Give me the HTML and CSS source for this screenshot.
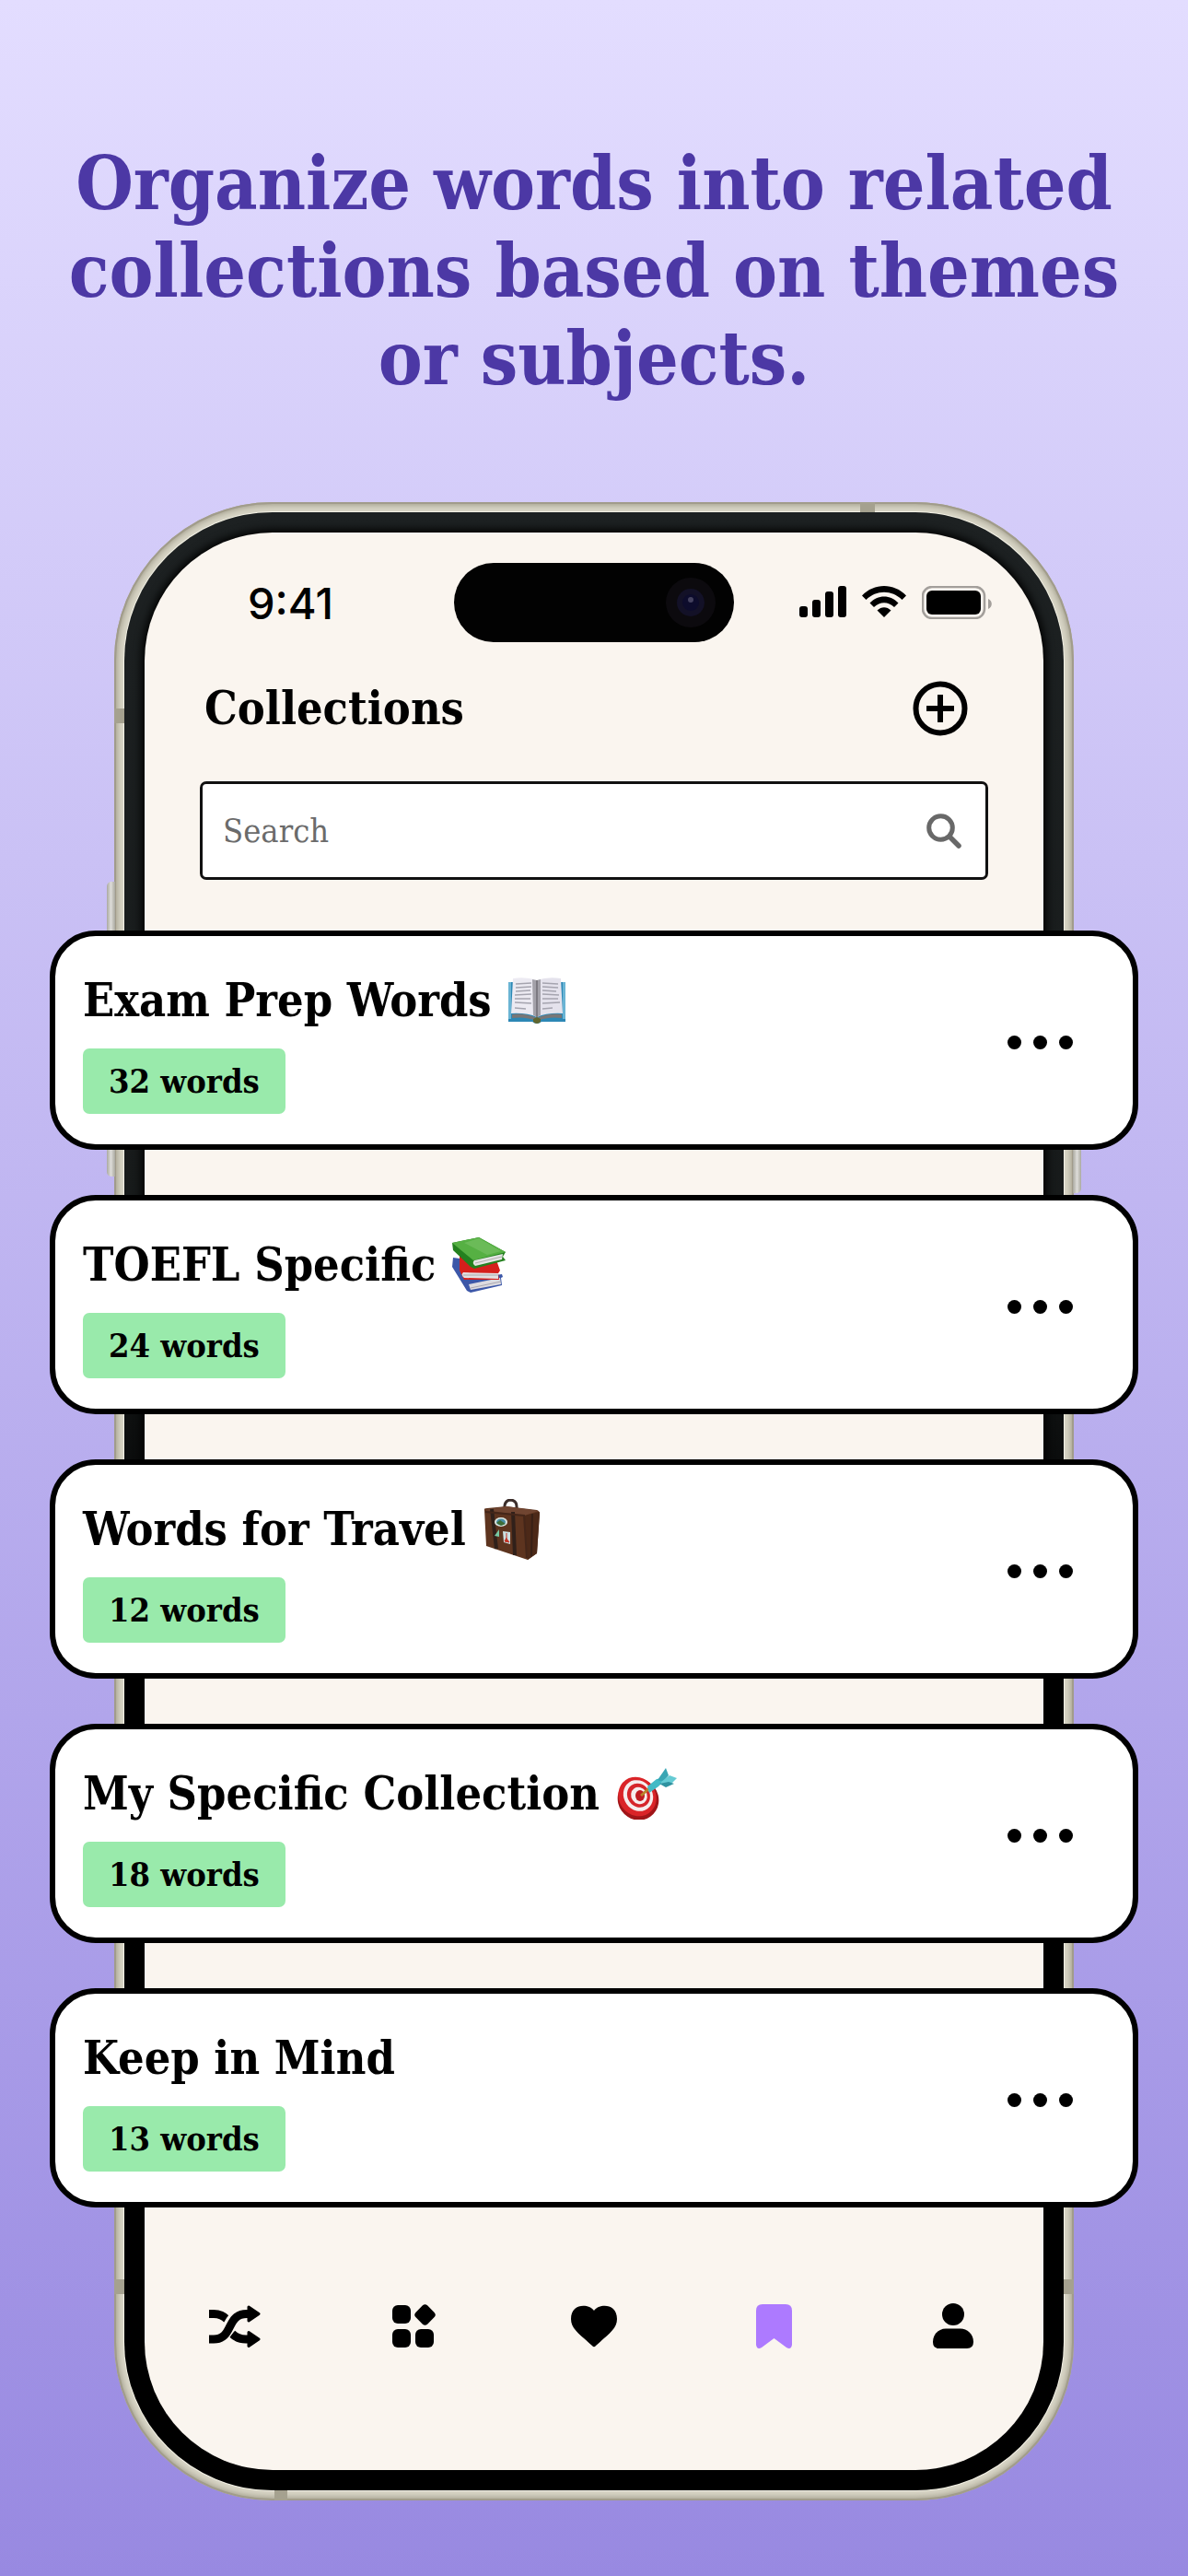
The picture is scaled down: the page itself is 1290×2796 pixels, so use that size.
FILE: index.html
```html
<!DOCTYPE html>
<html lang="en">

<head>
    <meta charset="UTF-8" />
    <meta name="viewport" content="width=device-width, initial-scale=1.0" />
    <title>Collections</title>
    <link rel="stylesheet" href="styles.css">
</head>

<body>
    <h1 class="headline">Organize words into related<br>collections based on themes<br>or subjects.</h1>

    <main class="phone">
        <!-- side buttons and antenna bands -->
        <span class="side-button volume-up"></span>
        <span class="side-button volume-down"></span>
        <span class="side-button power"></span>
        <span class="band band-top"></span>
        <span class="band band-left"></span>
        <span class="band band-left-low"></span>
        <span class="band band-right-low"></span>
        <span class="band band-bottom"></span>

        <div class="bezel">
            <div class="screen">
                <div class="status-bar">
                    <span class="time">9:41</span>
                    <div class="island">
                        <svg width="54" height="54" viewBox="0 0 54 54">
                            <circle cx="27" cy="27" r="27" fill="#0c0a0e" />
                            <circle cx="27" cy="27" r="15" fill="#131127" />
                            <circle cx="27" cy="27" r="9" fill="#0d0c2c" />
                            <circle cx="27" cy="24" r="3" fill="#45425f" />
                        </svg>
                    </div>
                    <div class="status-icons">
                        <svg width="51" height="34" viewBox="0 0 51 34">
                            <rect x="0" y="22" width="9" height="12" rx="3" />
                            <rect x="14" y="15" width="9" height="19" rx="3" />
                            <rect x="28" y="6" width="9" height="28" rx="3" />
                            <rect x="42" y="0" width="9" height="34" rx="3" />
                        </svg>
                        <svg width="48" height="34" viewBox="0 0 48 34">
                            <path d="M0 10.500C13-3.500 35-3.500 48 10.500L43.500 15C32.500 4 15.500 4 4.500 15Z" />
                            <path d="M8.500 18.500C17 9 31 9 39.500 18.500L35 23C28.500 16.500 19.500 16.500 13 23Z" />
                            <path d="M16.500 26.500C21 22 27 22 31.500 26.500L24 34Z" />
                        </svg>
                        <svg width="76" height="36" viewBox="0 0 76 36">
                            <rect x="1" y="1" width="67" height="34" rx="10" fill="none" stroke="#a39f9b" stroke-width="2.500" />
                            <rect x="5" y="5" width="59" height="26" rx="6" />
                            <path d="M72 14C77 16 77 23 72 25Z" fill="#a39f9b" />
                        </svg>
                    </div>
                </div>

                <header class="top">
                    <h2 class="page-title">Collections</h2>
                    <button class="add" aria-label="Add collection">
                        <svg width="60" height="60" viewBox="0 0 60 60" fill="none" stroke="#000" stroke-width="6">
                            <circle cx="30" cy="30" r="26.500" />
                            <path d="M30 15V45M15 30H45" />
                        </svg>
                    </button>
                </header>

                <div class="search">
                    <input type="search" id="search" placeholder="Search">
                    <label for="search" aria-label="Search">
                        <svg width="38" height="38" viewBox="0 0 38 38" fill="none" stroke="#686868" stroke-width="5">
                            <circle cx="15.500" cy="15.500" r="12.800" />
                            <path d="M25 25L35 35" stroke-linecap="round" stroke-width="5.500" />
                        </svg>
                    </label>
                </div>

                <ul class="collections">
                    <li class="card">
                        <div>
                            <h3 class="card-title">Exam Prep Words
                                <svg width="62" height="50" viewBox="0 0 62 50">
                                    <path d="M0 5H62V48H36Q31 52 26 48H0Z" fill="#2c87b5" />
                                    <path d="M0 5H3V45H0ZM59 5H62V45H59Z" fill="#6ab4d4" />
                                    <path d="M4 40Q18 38 31 44Q44 38 58 40V44Q44 42 31 47Q18 42 4 44Z" fill="#787677" />
                                    <path d="M5 1Q20-1 31 3V43Q20 38 3 39Z" fill="#eceaf2" />
                                    <path d="M57 1Q42-1 31 3V43Q42 38 59 39Z" fill="#e4e2ec" />
                                    <path d="M26 2L31 3L35 2V41L31 43L27 41Z" fill="#a3a1a9" />
                                    <path d="M31 3V43" stroke="#6f6d74" stroke-width="1.500" />
                                    <path d="M8 7L25 6M8 11L25 10M8 15L24 14M7 19L25 18M7 23L24 23M7 27L25 28M7 33L19 34M37 6L54 7M37 10L54 11M37 14L52 15M37 18L55 19M37 23L54 23M37 28L56 27M37 34L48 33" stroke="#a5a4af" stroke-width="1.300" />
                                    <path d="M27 45L31 43L35 45V48Q31 52 27 48Z" fill="#60662f" />
                                </svg>
                            </h3>
                            <span class="count">32 words</span>
                        </div>
                        <button class="more" aria-label="More options"><i></i><i></i><i></i></button>
                    </li>

                    <li class="card">
                        <div>
                            <h3 class="card-title">TOEFL Specific
                                <svg width="58" height="60" viewBox="0 0 58 60">
                                    <path d="M1 22L8 23L20 45L54 40L55 43L53 44L54 52L20 60L16 58L0 32Z" fill="#3c57a8" />
                                    <path d="M18 51L52 44L53 51L20 57Z" fill="#dcdbe0" />
                                    <path d="M20 55L53 48" stroke="#a9a8b0" />
                                    <path d="M8 20L47 22L52 36L50 39L51 46L13 46L8 36Z" fill="#d51f1c" />
                                    <path d="M12 38L50 39V45L13 44Q9 41 12 38Z" fill="#e2e0e2" />
                                    <path d="M12 41H50" stroke="#aaa7aa" />
                                    <path d="M0 6L29 0L58 16L55 21L58 25L24 34L20 32L1 14Z" fill="#24801f" />
                                    <path d="M0 6L29 0L58 16L23 25Z" fill="#56b043" />
                                    <path d="M13 6L29 1L53 15L38 19Z" fill="#79c367" opacity=".6" />
                                    <path d="M24 25L55 18L54 24L25 31Q21 28 24 25Z" fill="#e4e4e3" />
                                    <path d="M25 28L54 21" stroke="#aeb0ac" />
                                </svg>
                            </h3>
                            <span class="count">24 words</span>
                        </div>
                        <button class="more" aria-label="More options"><i></i><i></i><i></i></button>
                    </li>

                    <li class="card">
                        <div>
                            <h3 class="card-title">Words for Travel
                                <svg width="62" height="66" viewBox="0 0 62 66">
                                    <path d="M24 13V7Q25 1 31 1Q37 2 37 8V13" fill="none" stroke="#3b2d2a" stroke-width="3" />
                                    <path d="M2 12Q1 10 5 10L26 8L59 12Q62 13 62 16L59 59L49 66L4 51Z" fill="#5d341f" />
                                    <path d="M45 18L62 14L59 59L49 66Z" fill="#4c2918" />
                                    <path d="M2 12L26 8L61 13L45 18Z" fill="#704531" />
                                    <path d="M10 11L15 54M33 14L35 61" stroke="#30201a" stroke-width="4" />
                                    <path d="M54 16L53 62" stroke="#382016" stroke-width="2" />
                                    <path d="M3 14L45 18L48 64" fill="none" stroke="#442619" stroke-width="2" />
                                    <ellipse cx="20" cy="25" rx="7" ry="5" fill="#dbe5e0" />
                                    <ellipse cx="20" cy="25" rx="5" ry="3.500" fill="#478da5" />
                                    <path d="M15 26L19 23L25 27L20 29Z" fill="#3e6d38" />
                                    <path d="M13 40L18 33V41Z" fill="#77c9a4" />
                                    <path d="M22 35L30 36V49L23 47Z" fill="#cbdfe1" />
                                    <path d="M26 37V43L29 47L24 46L26 42" fill="#c33023" stroke="#c33023" />
                                </svg>
                            </h3>
                            <span class="count">12 words</span>
                        </div>
                        <button class="more" aria-label="More options"><i></i><i></i><i></i></button>
                    </li>

                    <li class="card">
                        <div>
                            <h3 class="card-title">My Specific Collection
                                <svg width="66" height="56" viewBox="0 0 66 56">
                                    <ellipse cx="24" cy="34" rx="22" ry="23" transform="rotate(-35 24 34)" fill="#a01518" />
                                    <ellipse cx="23" cy="31" rx="20" ry="22" transform="rotate(-35 23 31)" fill="#da2428" />
                                    <ellipse cx="24" cy="30" rx="15.500" ry="17.500" transform="rotate(-35 24 30)" fill="#f6eded" />
                                    <ellipse cx="24.500" cy="30" rx="12" ry="13.500" transform="rotate(-35 24 30)" fill="#d6252a" />
                                    <ellipse cx="25" cy="30" rx="8.500" ry="9.500" transform="rotate(-35 25 30)" fill="#f6eded" />
                                    <ellipse cx="26" cy="30" rx="5" ry="6" fill="#bf1c22" />
                                    <path d="M27 30L36 22" stroke="#b98329" stroke-width="3" />
                                    <path d="M34 20L44 12L51 11L52 14L46 20L36 27Z" fill="#43bac6" />
                                    <path d="M45 13L54 0L57 8L51 15Z" fill="#38a6b4" />
                                    <path d="M49 15L58 8L66 11L61 16L50 17Z" fill="#65cbd4" />
                                    <path d="M47 17L57 15L63 17L54 21Z" fill="#2f92a0" />
                                </svg>
                            </h3>
                            <span class="count">18 words</span>
                        </div>
                        <button class="more" aria-label="More options"><i></i><i></i><i></i></button>
                    </li>

                    <li class="card">
                        <div>
                            <h3 class="card-title">Keep in Mind</h3>
                            <span class="count">13 words</span>
                        </div>
                        <button class="more" aria-label="More options"><i></i><i></i><i></i></button>
                    </li>
                </ul>

                <nav class="tabs">
                    <a href="#" aria-label="Shuffle">
                        <svg width="56" height="48" viewBox="0 0 56 48" fill="none" stroke="#000" stroke-width="9">
                            <path d="M0 10.500H5Q14 10.500 20 17" />
                            <path d="M25 32Q31 38 40 38H44" />
                            <path d="M11 36C23 31 21 15 35 11.500" stroke="#faf5ef" stroke-width="14" />
                            <path d="M0 38H5C27 38 18 10.500 41 10.500H44" />
                            <path d="M43 3L54 10.500L43 18ZM43 30.500L54 38L43 45.500Z" fill="#000" stroke-width="3" stroke-linejoin="round" />
                        </svg>
                    </a>
                    <a href="#" aria-label="Categories">
                        <svg width="47" height="47" viewBox="0 0 47 47">
                            <rect x="0" y="1" width="20" height="20" rx="6" />
                            <rect x="0" y="27" width="20" height="20" rx="6" />
                            <rect x="25" y="27" width="20" height="20" rx="6" />
                            <rect x="26.500" y="2.500" width="18" height="18" rx="4" transform="rotate(45 35.500 11.500)" />
                        </svg>
                    </a>
                    <a href="#" aria-label="Favorites">
                        <svg width="50" height="46" viewBox="0 0 50 46">
                            <path d="M25 6C31-2 50-2 50 15C50 26 40 32 27 44Q25 46.500 23 44C10 32 0 26 0 15C0-2 19-2 25 6Z" />
                        </svg>
                    </a>
                    <a href="#" aria-label="Collections">
                        <svg width="39" height="48" viewBox="0 0 39 48" fill="#ad7aff">
                            <path d="M7 0H32Q39 0 39 7V44Q38 50 33 47L19.500 37L6 47Q1 50 0 44V7Q0 0 7 0Z" />
                        </svg>
                    </a>
                    <a href="#" aria-label="Profile">
                        <svg width="44" height="49" viewBox="0 0 44 49">
                            <circle cx="22" cy="12" r="12" />
                            <path d="M0 42C0 33 7 27.500 14 27.500H30C37 27.500 44 33 44 42Q44 49 37 49H7Q0 49 0 42Z" />
                        </svg>
                    </a>
                </nav>
            </div>
        </div>
    </main>
</body>

</html>
```

FILE: styles.css
```css
* {
    box-sizing: border-box;
}

body {
    margin: 0;
    min-height: 100vh;
    padding: 152px 0 82px;
    background: linear-gradient(#e3ddff, #9889e1);
    font-family: 'Roboto Slab', 'DejaVu Serif Condensed', 'DejaVu Serif', serif;
    font-weight: 600;
    color: #000;
}

h1,
h2,
h3,
ul {
    margin: 0;
    padding: 0;
    font-weight: 600;
}

button {
    border: none;
    background: none;
    padding: 0;
    cursor: pointer;
}

svg {
    display: block;
    flex: none;
}

.headline {
    text-align: center;
    color: #4c38a5;
    font-size: 80px;
    line-height: 95px;
}

/* Phone frame */
.phone {
    position: relative;
    margin: 108px 124px 0;
    padding: 11px;
    border-radius: 172px;
    background: #d8d5c6;
    box-shadow: inset 0 0 0 2px #a19c8b, inset 0 0 7px 3px #9d9987;
}

.bezel {
    padding: 22px;
    border-radius: 161px;
    background: linear-gradient(#1d2122, #161919 40%, #000 56%);
    box-shadow: 0 0 0 1px #f3f1e6;
}

.screen {
    padding-top: 33px;
    border-radius: 139px;
    background: #faf5ef;
    box-shadow: 0 0 10px 3px #000;
}

.side-button {
    position: absolute;
    width: 9px;
    background: linear-gradient(90deg, #aaa9a0, #dddcd8, #aaa9a0);
}

.volume-up,
.volume-down {
    left: -8px;
    height: 140px;
    border-radius: 5px 0 0 5px;
}

.volume-up {
    top: 412px;
}

.volume-down {
    top: 592px;
}

.power {
    top: 520px;
    right: -8px;
    height: 230px;
    border-radius: 0 5px 5px 0;
}

.band {
    position: absolute;
    width: 11px;
    height: 16px;
    background: #a5a18f;
}

.band-top {
    top: 0;
    right: 216px;
    width: 16px;
    height: 11px;
}

.band-left {
    top: 224px;
    left: 0;
}

.band-left-low {
    bottom: 224px;
    left: 0;
}

.band-right-low {
    bottom: 224px;
    right: 0;
}

.band-bottom {
    bottom: 0;
    left: 174px;
    width: 14px;
    height: 11px;
}

/* Status bar */
.status-bar {
    display: grid;
    grid-template-columns: 1fr 304px 1fr;
    align-items: center;
}

.time {
    padding-left: 112px;
    font-family: Inter, 'Liberation Sans', sans-serif;
    font-size: 47px;
    font-weight: 500;
}

.island {
    display: flex;
    justify-content: flex-end;
    align-items: center;
    height: 86px;
    padding-right: 20px;
    border-radius: 43px;
    background: #020202;
}

.status-icons {
    display: flex;
    justify-content: flex-end;
    gap: 17px;
    padding-right: 56px;
}

/* Header and search */
.top {
    display: flex;
    justify-content: space-between;
    align-items: center;
    margin: 42px 82px 0 65px;
}

.page-title {
    font-size: 50px;
    line-height: 60px;
    font-weight: 700;
}

.search {
    display: flex;
    align-items: center;
    height: 107px;
    margin: 49px 60px 0;
    padding: 0 26px 0 22px;
    border: 3px solid #111;
    border-radius: 7px;
    background: #fff;
}

.search input {
    flex: 1;
    min-width: 0;
    border: none;
    outline: none;
    padding: 0;
    background: none;
    font: inherit;
    font-weight: 400;
    font-size: 36px;
}

.search input::placeholder {
    color: #6b6b6b;
}

/* Collection cards, wider than the phone */
.collections {
    position: relative;
    display: flex;
    flex-direction: column;
    gap: 49px;
    margin: 55px -103px 0;
    list-style: none;
}

.card {
    display: flex;
    justify-content: space-between;
    align-items: center;
    height: 238px;
    padding: 4px 65px 0 30px;
    border: 6px solid #000;
    border-radius: 50px;
    background: #fff;
}

.card-title {
    display: flex;
    align-items: center;
    gap: 18px;
    height: 66px;
    font-size: 50px;
    line-height: 66px;
    white-space: nowrap;
}

.count {
    display: inline-block;
    margin-top: 19px;
    padding: 0 28px;
    border-radius: 7px;
    background: #99eaab;
    font-size: 36px;
    line-height: 71px;
}

.more {
    display: flex;
    gap: 13px;
}

.more i {
    width: 15px;
    height: 15px;
    border-radius: 50%;
    background: #000;
}

/* Bottom tabs */
.tabs {
    display: flex;
    align-items: center;
    padding: 104px 0 132px;
}

.tabs a {
    flex: 1;
    display: flex;
    justify-content: center;
}
```
